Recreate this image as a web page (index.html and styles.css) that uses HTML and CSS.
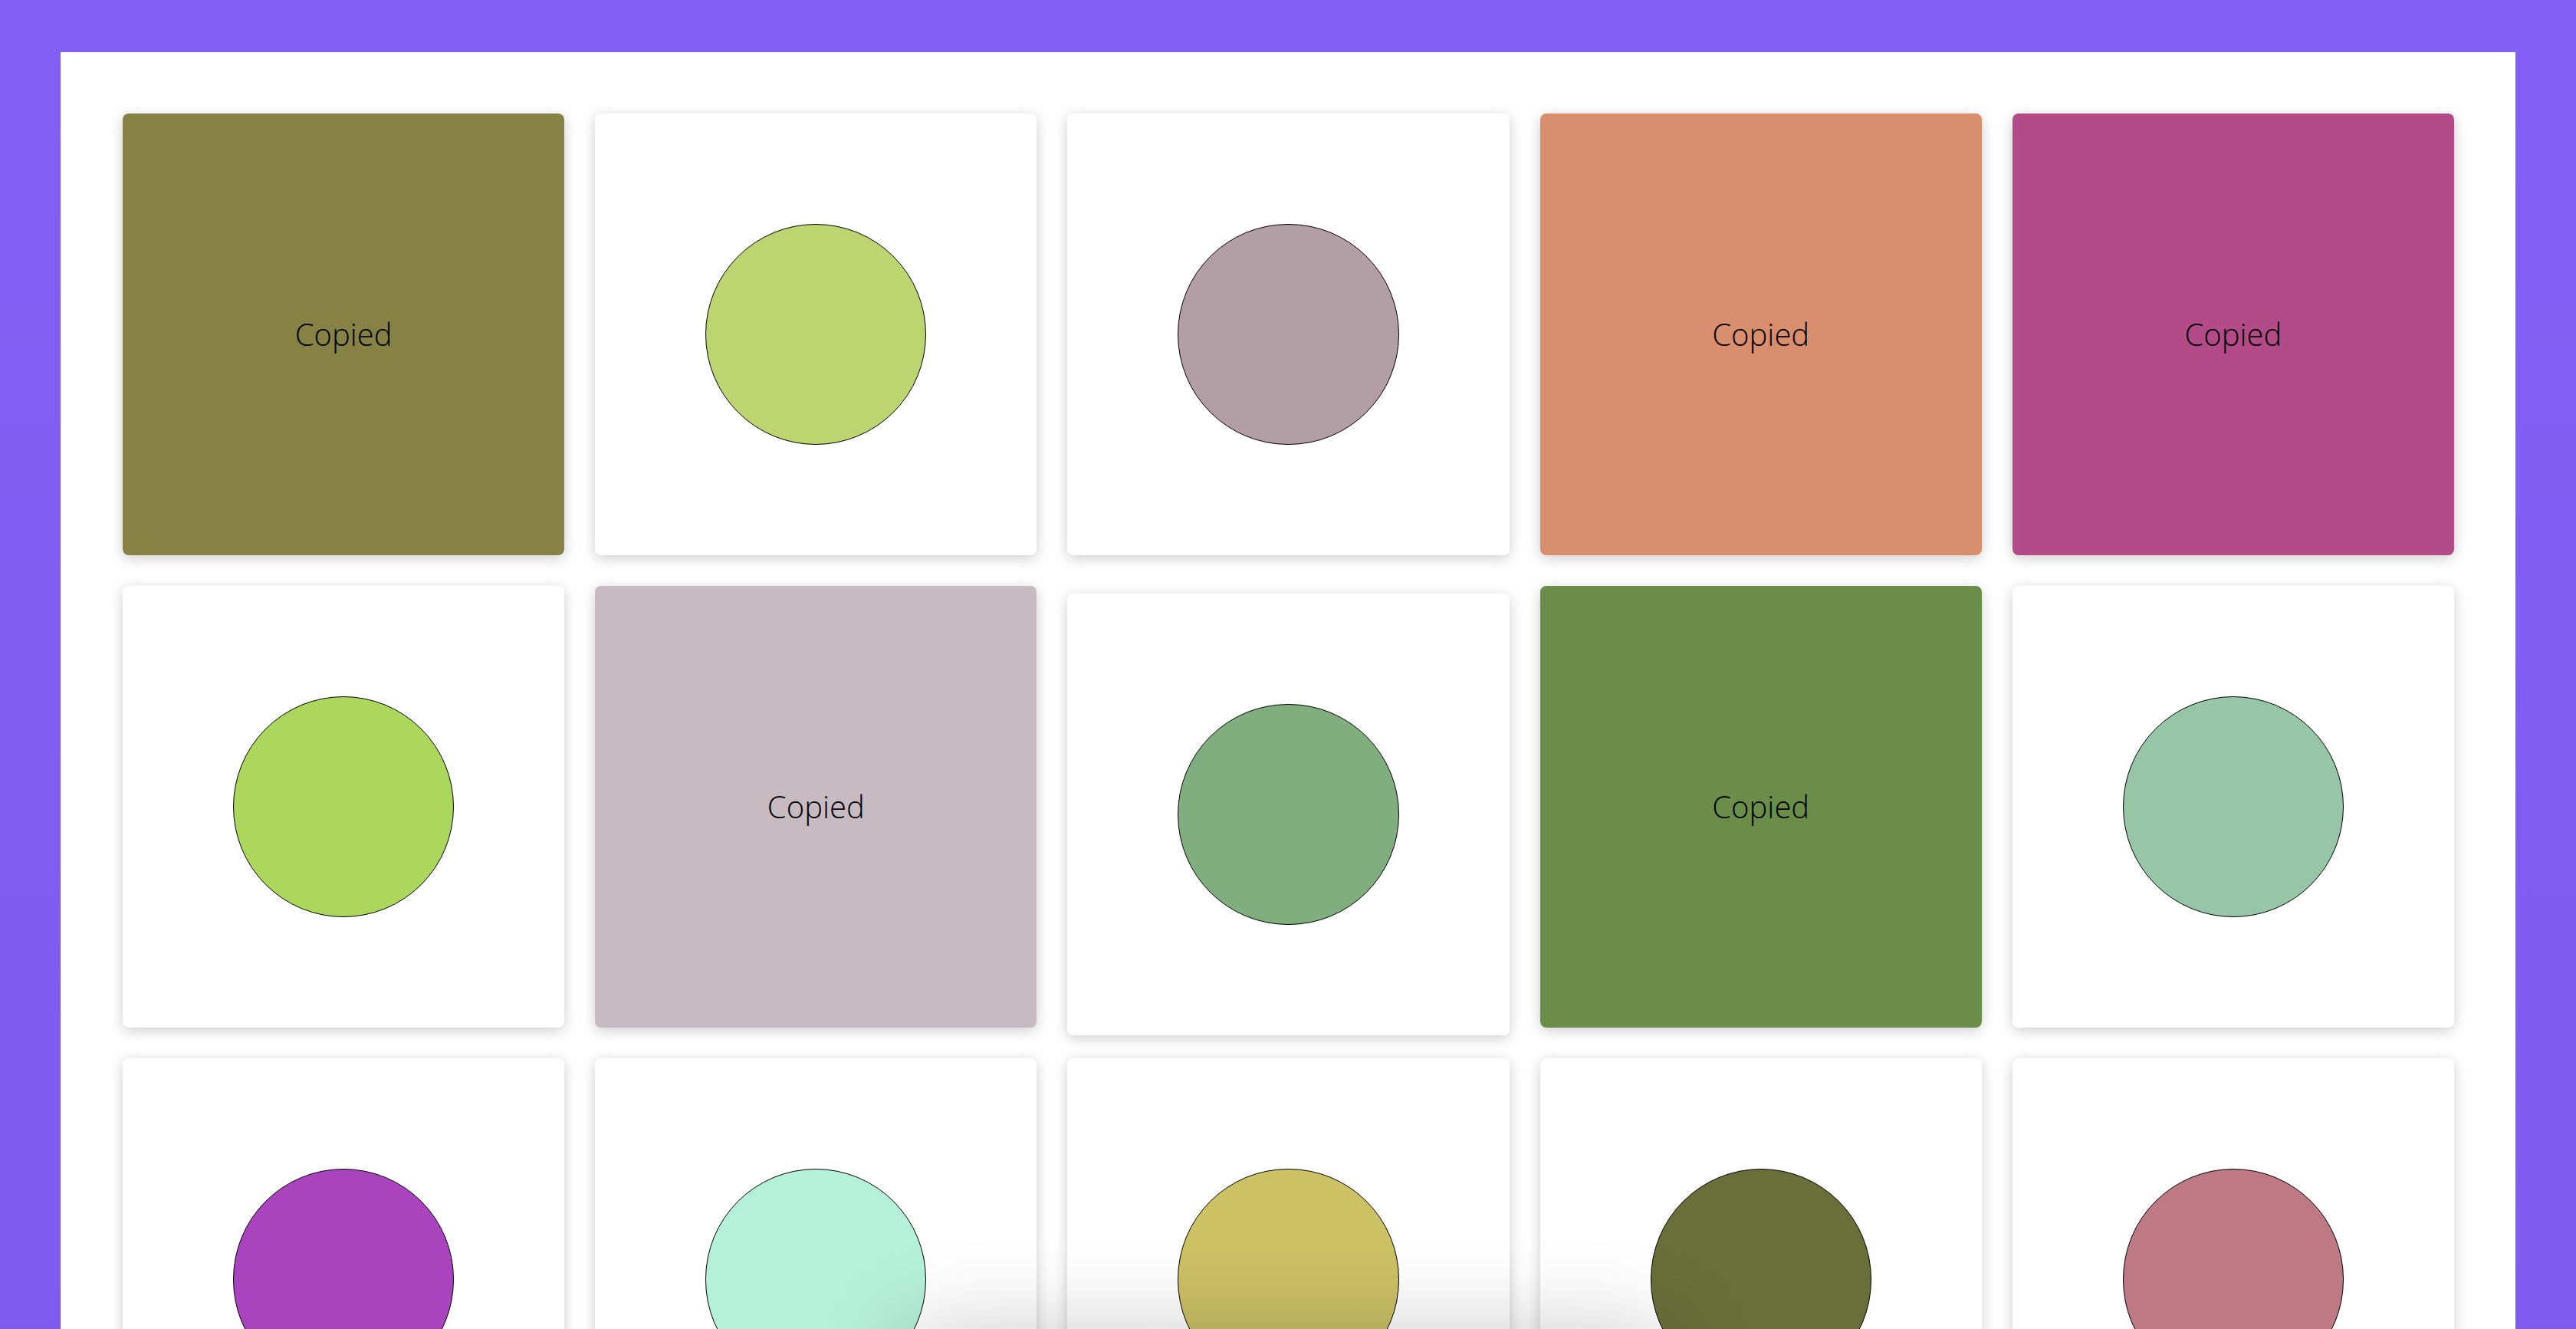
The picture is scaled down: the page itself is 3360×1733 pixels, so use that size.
FILE: index.html
```html
<!DOCTYPE html>
<html lang="en">
<head>
<meta charset="utf-8">
<title>Palette</title>
<link rel="stylesheet" href="styles.css">
</head>
<body>
<main class="panel">
  <section class="grid">
    <div class="card filled" style="background:#868246"><span class="label">Copied</span></div>
    <div class="card"><span class="dot" style="background:#bcd571"></span></div>
    <div class="card"><span class="dot" style="background:#b39ea5"></span></div>
    <div class="card filled" style="background:#d98e6d"><span class="label">Copied</span></div>
    <div class="card filled" style="background:#b34b89"><span class="label">Copied</span></div>

    <div class="card"><span class="dot" style="background:#aad75c"></span></div>
    <div class="card filled" style="background:#c7bac1"><span class="label">Copied</span></div>
    <div class="card lifted"><span class="dot" style="background:#80ae7e"></span></div>
    <div class="card filled" style="background:#6a8e4a"><span class="label">Copied</span></div>
    <div class="card"><span class="dot" style="background:#96c6a6"></span></div>

    <div class="card"><span class="dot" style="background:#aa44be"></span></div>
    <div class="card"><span class="dot" style="background:#b5f0d8"></span></div>
    <div class="card"><span class="dot" style="background:#cdc166"></span></div>
    <div class="card"><span class="dot" style="background:#6a6f39"></span></div>
    <div class="card"><span class="dot" style="background:#bd7a84"></span></div>
  </section>
</main>
<div class="toast" aria-hidden="true"></div>
</body>
</html>
```

FILE: styles.css
```css
html, body {
  margin: 0;
  padding: 0;
}

body {
  background: linear-gradient(180deg, #8360f5 0%, #7e5bef 100%);
  padding: 68px 79px 0 79px;
  min-height: 100vh;
  box-sizing: border-box;
  font-family: "Open Sans", "Liberation Sans", sans-serif;
  color: #000;
}

.panel {
  background: #ffffff;
  padding: 80px 80px 80px 81px;
}

.grid {
  display: grid;
  grid-template-columns: repeat(5, 1fr);
  gap: 40px;
}

.card {
  aspect-ratio: 1 / 1;
  background: #ffffff;
  border-radius: 8px;
  box-shadow: 0 4px 18px rgba(0, 0, 0, 0.2);
  display: flex;
  align-items: center;
  justify-content: center;
}

.card.lifted {
  transform: translateY(10px);
}

.dot {
  width: 50%;
  aspect-ratio: 1 / 1;
  border-radius: 50%;
  border: 1px solid #000;
  box-sizing: border-box;
}

.label {
  font-family: "Open Sans", "Liberation Sans", sans-serif;
  font-weight: 300;
  font-size: 40px;
  line-height: 1;
  color: #000;
}

.toast {
  position: fixed;
  left: 50%;
  bottom: -140px;
  width: 1000px;
  height: 140px;
  margin-left: -500px;
  border-radius: 12px;
  background: #fff;
  box-shadow: 0 0 120px rgba(0, 0, 0, 0.2);
  z-index: 10;
}
```
